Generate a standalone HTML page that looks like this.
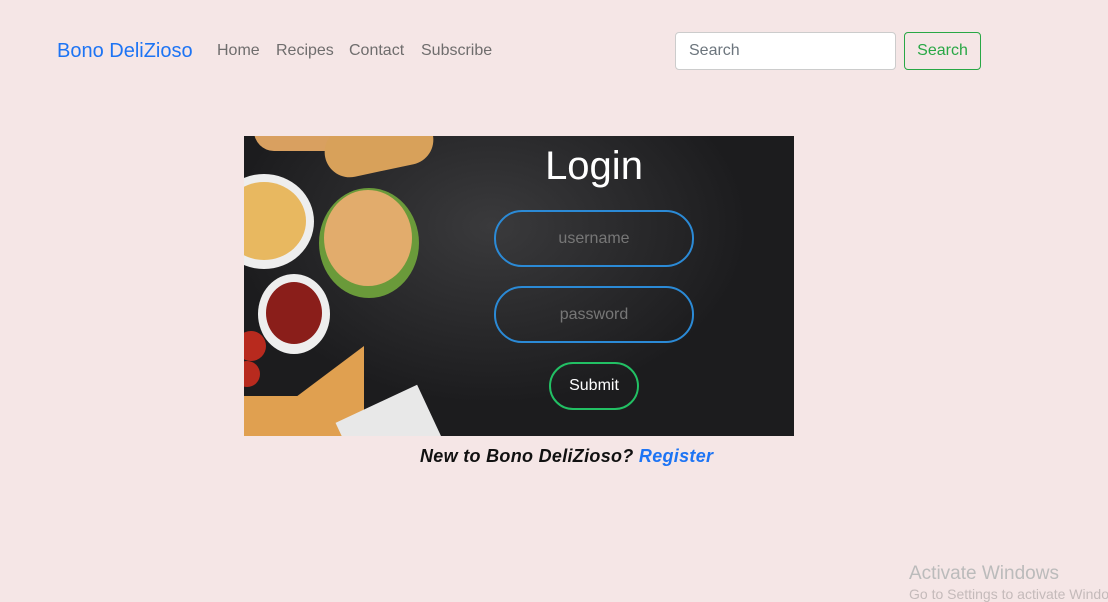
<!DOCTYPE html>
<html><head><style>
body{margin:0;width:1108px;height:595px;background:#f5e6e6;font-family:"Liberation Sans",sans-serif;position:relative;overflow:hidden}
.a{position:absolute}
nav a{position:absolute;top:42px;font-size:16px;color:#6f6d6d;text-decoration:none}
</style></head><body>
<nav>
<a style="left:57px;top:40px;font-size:20px;color:#1d74f4">Bono DeliZioso</a>
<a style="left:217px">Home</a>
<a style="left:276px">Recipes</a>
<a style="left:349px">Contact</a>
<a style="left:421px">Subscribe</a>
</nav>
<div class="a" style="left:675px;top:32px;width:219px;height:36px;background:#fff;border:1px solid #ccc;border-radius:4px"><span class="a" style="left:13px;top:9px;font-size:16px;color:#6c757d">Search</span></div>
<div class="a" style="left:904px;top:32px;width:75px;height:36px;border:1px solid #28a745;border-radius:4px;color:#28a745;font-size:16px;text-align:center;line-height:36px">Search</div>

<div class="a" style="left:244px;top:136px;width:550px;height:300px;background:radial-gradient(ellipse at 45% 30%,#3a3a3c,#1c1c1e 60%);overflow:hidden">
 <div class="a" style="left:10px;top:-25px;width:110px;height:40px;border-radius:20px;background:#d9a060"></div>
 <div class="a" style="left:80px;top:-15px;width:110px;height:50px;border-radius:25px;background:#d8a15a;transform:rotate(-12deg)"></div>
 <div class="a" style="left:-30px;top:38px;width:100px;height:95px;border-radius:50%;background:#eee;"></div>
 <div class="a" style="left:-22px;top:46px;width:84px;height:78px;border-radius:50%;background:#e8b860"></div>
 <div class="a" style="left:75px;top:52px;width:100px;height:110px;border-radius:50%;background:#6a9a3a"></div>
 <div class="a" style="left:80px;top:54px;width:88px;height:96px;border-radius:50%;background:#e2ac6c"></div>
 <div class="a" style="left:14px;top:138px;width:72px;height:80px;border-radius:50%;background:#eee"></div>
 <div class="a" style="left:22px;top:146px;width:56px;height:62px;border-radius:50%;background:#8a1e1a"></div>
 <div class="a" style="left:-8px;top:195px;width:30px;height:30px;border-radius:50%;background:#b82a1e"></div>
 <div class="a" style="left:-10px;top:225px;width:26px;height:26px;border-radius:50%;background:#b82a1e"></div>
 <div class="a" style="left:0;top:210px;width:0;height:0;border-left:120px solid transparent;border-bottom:90px solid #e0a050"></div>
 <div class="a" style="left:0;top:260px;width:90px;height:40px;background:#e0a050"></div>
 <div class="a" style="left:100px;top:265px;width:90px;height:60px;background:#e8e8e8;transform:rotate(-25deg)"></div>
 <div class="a" style="left:0;top:8px;width:550px;text-align:center;padding-left:150px;box-sizing:border-box;color:#fff;font-size:40px">Login</div>
 <div class="a" style="left:250px;top:74px;width:196px;height:53px;border:2px solid #2b8ad6;border-radius:28px;color:#777;font-size:16px;text-align:center;line-height:53px">username</div>
 <div class="a" style="left:250px;top:150px;width:196px;height:53px;border:2px solid #2b8ad6;border-radius:28px;color:#777;font-size:16px;text-align:center;line-height:53px">password</div>
 <div class="a" style="left:305px;top:226px;width:86px;height:44px;border:2px solid #22c064;border-radius:24px;color:#fff;font-size:16px;text-align:center;line-height:44px">Submit</div>
</div>
<div class="a" style="left:420px;top:446px;font-size:18px;font-weight:bold;font-style:italic;color:#111;letter-spacing:0.3px">New to Bono DeliZioso? <span style="color:#1d74f4">Register</span></div>
<div class="a" style="left:909px;top:563px;font-size:19px;color:#bbb;white-space:nowrap">Activate Windows</div>
<div class="a" style="left:909px;top:586px;font-size:14px;color:#c4baba;white-space:nowrap">Go to Settings to activate Windows.</div>
</body></html>
